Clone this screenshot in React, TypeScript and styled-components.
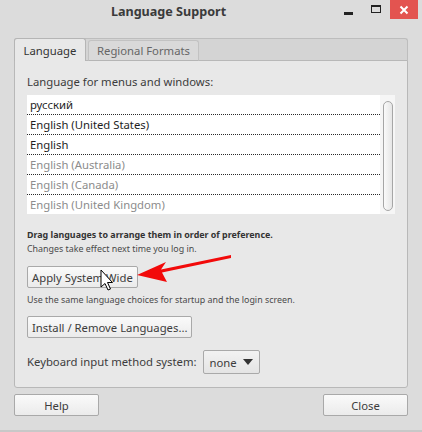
import styled, { createGlobalStyle } from "styled-components";

const GlobalStyle = createGlobalStyle`
  html, body {
    margin: 0;
    padding: 0;
    background: #dcdcdc;
  }
  body {
    font-family: "Noto Sans", "Open Sans", sans-serif;
    color: #3c3c3c;
  }
`;

const Window = styled.div`
  position: relative;
  display: flex;
  flex-direction: column;
  width: 422px;
  height: 432px;
  box-sizing: border-box;
  background: #dcdcdc;
  border-bottom: 2px solid #c8c8c8;
  overflow: hidden;
`;

const TitleBar = styled.div`
  display: flex;
  align-items: flex-start;
  height: 28px;
  flex-shrink: 0;
`;

const Title = styled.div`
  flex: 1;
  text-align: center;
  font-size: 12.6px;
  font-weight: bold;
  color: #3a3a3a;
  line-height: 24px;
  padding-left: 2px;
`;

const Controls = styled.div`
  display: flex;
  align-items: flex-start;
  margin-right: 4px;
`;

const CtrlButton = styled.div<{ $close?: boolean }>`
  display: flex;
  align-items: center;
  justify-content: center;
  width: ${(p) => (p.$close ? "28px" : "27px")};
  height: 19px;
  background: ${(p) => (p.$close ? "#e35450" : "transparent")};
  margin-left: ${(p) => (p.$close ? "1px" : "0")};
`;

const MinGlyph = styled.div`
  width: 9px;
  height: 3px;
  margin-top: 7px;
  background: #222;
`;

const MaxGlyph = styled.div`
  width: 8px;
  height: 5px;
  margin-bottom: 1px;
  border: 1px solid #222;
  border-top-width: 2px;
`;

const Body = styled.div`
  display: flex;
  flex-direction: column;
  flex: 1;
  padding: 10px 14px 0 14px;
`;

const Notebook = styled.div`
  display: flex;
  flex-direction: column;
  height: 350px;
`;

const TabStrip = styled.div`
  display: flex;
  align-items: flex-end;
  height: 23px;
  background: #d4d4d4;
  border: 1px solid #bdbdbd;
  border-bottom: none;
  border-radius: 3px 3px 0 0;
  box-sizing: border-box;
`;

const Tab = styled.div<{ $active?: boolean }>`
  display: flex;
  align-items: center;
  justify-content: center;
  white-space: nowrap;
  height: ${(p) => (p.$active ? "23px" : "21px")};
  box-sizing: border-box;
  margin-top: ${(p) => (p.$active ? "-1px" : "0")};
  margin-left: ${(p) => (p.$active ? "-1px" : "2px")};
  width: ${(p) => (p.$active ? "72px" : "111px")};
  font-size: 11.3px;
  color: ${(p) => (p.$active ? "#333" : "#666")};
  background: ${(p) => (p.$active ? "#e8e8e8" : "#d9d9d9")};
  border: 1px solid ${(p) => (p.$active ? "#b5b5b5" : "#c2c2c2")};
  border-bottom: ${(p) => (p.$active ? "none" : "1px solid #b5b5b5")};
  border-radius: 3px 3px 0 0;
  position: relative;
  z-index: ${(p) => (p.$active ? 1 : 0)};
`;

const Panel = styled.div`
  display: flex;
  flex-direction: column;
  flex: 1;
  background: #e8e8e8;
  border: 1px solid #b8b8b8;
  border-radius: 0 0 3px 3px;
  margin-top: -1px;
  padding: 12px 12px 0 12px;
`;

const Label = styled.div`
  font-size: 11.3px;
  color: #3c3c3c;
  line-height: 18px;
  white-space: nowrap;
`;

const List = styled.div`
  display: flex;
  margin-top: 4px;
  height: 119px;
  background: #ffffff;
  overflow: hidden;
`;

const Rows = styled.div`
  flex: 1;
  display: flex;
  flex-direction: column;
`;

const Row = styled.div<{ $dim?: boolean }>`
  height: 19px;
  flex-shrink: 0;
  line-height: 19px;
  padding-left: 3px;
  font-size: 11.3px;
  color: ${(p) => (p.$dim ? "#8c8c8c" : "#1e1e1e")};
  border-bottom: 1px dotted #2a2a2a;
`;

const ScrollTrack = styled.div`
  width: 15px;
  background: #f6f6f6;
  display: flex;
  justify-content: center;
  padding-top: 6px;
  box-sizing: border-box;
`;

const Thumb = styled.div`
  width: 8px;
  height: 108px;
  border: 1px solid #a6a6a6;
  border-radius: 5px;
  background: linear-gradient(to right, #fafafa, #e6e6e6);
`;

const HintBold = styled.div`
  margin-top: 14px;
  font-size: 8.9px;
  font-weight: bold;
  color: #333;
  line-height: 14px;
`;

const Hint = styled.div<{ $top?: number }>`
  margin-top: ${(p) => p.$top ?? 0}px;
  font-size: 8.9px;
  color: #4a4a4a;
  line-height: 14px;
`;

const Button = styled.div<{ $w?: number }>`
  display: flex;
  align-items: center;
  justify-content: center;
  box-sizing: border-box;
  width: ${(p) => (p.$w ? `${p.$w}px` : "auto")};
  height: 22px;
  padding: 0 4px;
  align-self: flex-start;
  white-space: nowrap;
  font-size: 11.3px;
  color: #3c3c3c;
  background: linear-gradient(to bottom, #fafafa, #ebebeb);
  border: 1px solid #a9a9a9;
  border-radius: 2px;
`;

const ApplyWrap = styled.div`
  margin-top: 10px;
  align-self: flex-start;
`;

const InstallWrap = styled.div`
  margin-top: 9px;
  align-self: flex-start;
`;

const KeyboardRow = styled.div`
  display: flex;
  align-items: center;
  gap: 6px;
  margin-top: 12px;
`;

const Combo = styled.div`
  display: flex;
  align-items: center;
  gap: 6px;
  box-sizing: border-box;
  height: 24px;
  padding: 0 6px;
  font-size: 11.3px;
  color: #3c3c3c;
  background: linear-gradient(to bottom, #f2f2f2, #e4e4e4);
  border: 1px solid #a9a9a9;
  border-radius: 2px;
`;

const Footer = styled.div`
  display: flex;
  justify-content: space-between;
  margin-top: 6px;
`;

const Overlay = styled.svg`
  position: absolute;
  left: 0;
  top: 0;
  pointer-events: none;
`;

export default function App() {
  const rows = [
    { t: "русский" },
    { t: "English (United States)" },
    { t: "English" },
    { t: "English (Australia)", dim: true },
    { t: "English (Canada)", dim: true },
    { t: "English (United Kingdom)", dim: true },
  ];
  return (
    <>
      <GlobalStyle />
      <Window>
        <TitleBar>
          <Title>Language Support</Title>
          <Controls>
            <CtrlButton>
              <MinGlyph />
            </CtrlButton>
            <CtrlButton>
              <MaxGlyph />
            </CtrlButton>
            <CtrlButton $close>
              <svg width="10" height="10" viewBox="0 0 10 10">
                <path d="M1.5 1.5 L8.5 8.5 M8.5 1.5 L1.5 8.5" stroke="#fff" strokeWidth="2" />
              </svg>
            </CtrlButton>
          </Controls>
        </TitleBar>
        <Body>
          <Notebook>
            <TabStrip>
              <Tab $active>Language</Tab>
              <Tab>Regional Formats</Tab>
            </TabStrip>
            <Panel>
              <Label>Language for menus and windows:</Label>
              <List>
                <Rows>
                  {rows.map((r) => (
                    <Row key={r.t} $dim={r.dim}>
                      {r.t}
                    </Row>
                  ))}
                </Rows>
                <ScrollTrack>
                  <Thumb />
                </ScrollTrack>
              </List>
              <HintBold>Drag languages to arrange them in order of preference.</HintBold>
              <Hint>Changes take effect next time you log in.</Hint>
              <ApplyWrap>
                <Button>Apply System Wide</Button>
              </ApplyWrap>
              <Hint $top={5}>Use the same language choices for startup and the login screen.</Hint>
              <InstallWrap>
                <Button>Install / Remove Languages...</Button>
              </InstallWrap>
              <KeyboardRow>
                <Label>Keyboard input method system:</Label>
                <Combo>
                  none
                  <svg width="10" height="6" viewBox="0 0 10 6">
                    <path d="M0 0 L10 0 L5 6 Z" fill="#333" />
                  </svg>
                </Combo>
              </KeyboardRow>
            </Panel>
          </Notebook>
          <Footer>
            <Button $w={85}>Help</Button>
            <Button $w={85}>Close</Button>
          </Footer>
        </Body>
        <Overlay width="422" height="432" viewBox="0 0 422 432">
          <path
            d="M231 255 L231 258 L162 272.5 L167 282 L137 275 L166 262 L161 269.5 Z"
            fill="#f20a0a"
          />
          <path
            d="M101 270 L101 287 L105 283.5 L108 290 L110.5 289 L107.5 282.5 L112.5 282.5 Z"
            fill="#fff"
            stroke="#000"
            strokeWidth="1"
            strokeLinejoin="round"
          />
        </Overlay>
      </Window>
    </>
  );
}
